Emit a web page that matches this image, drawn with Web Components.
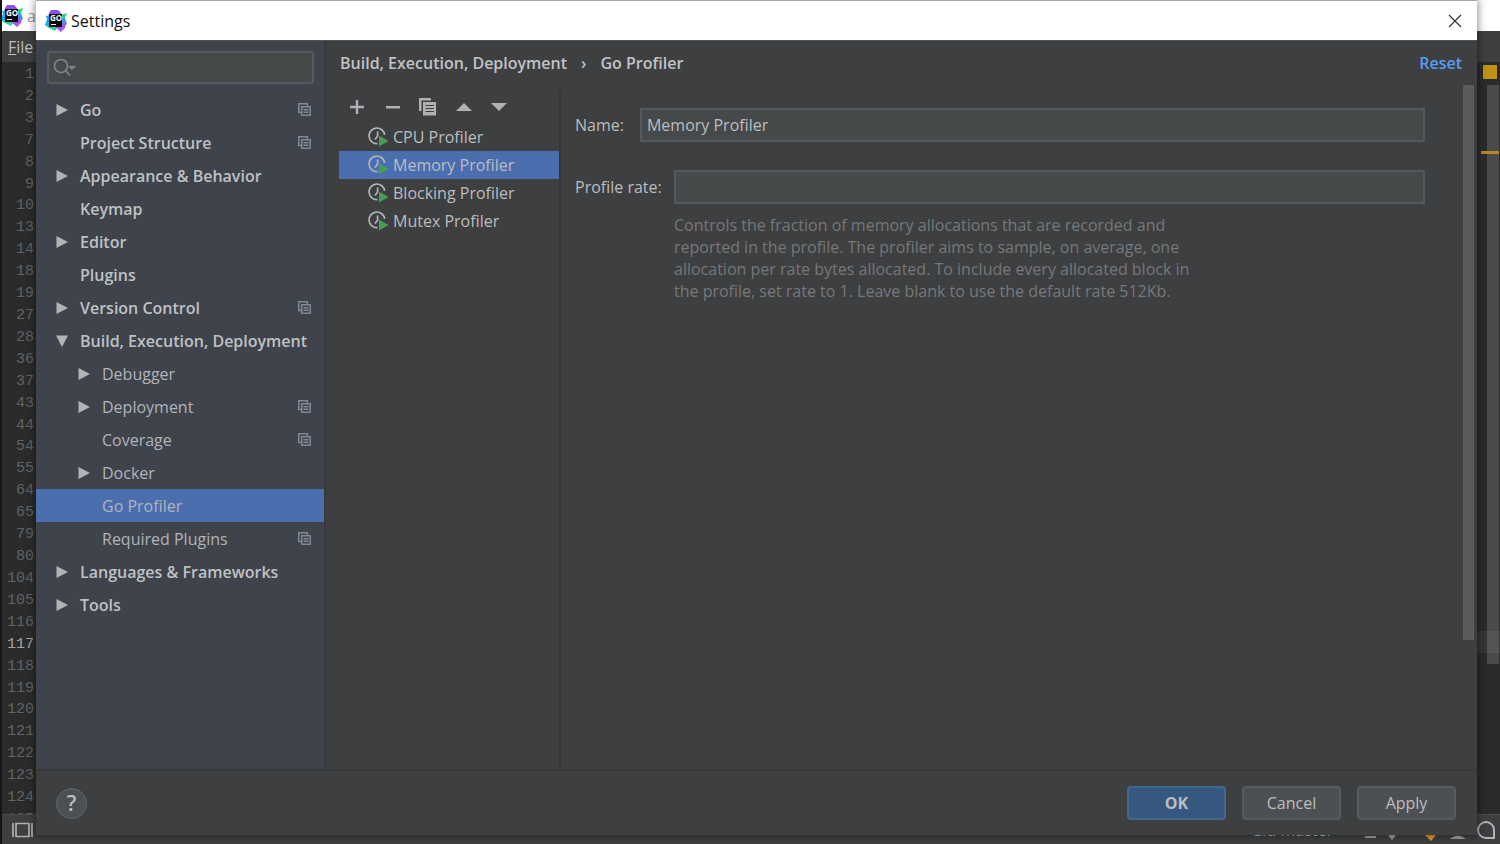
<!DOCTYPE html>
<html lang="en">
<head>
<meta charset="utf-8">
<title>Settings</title>
<style>
html, body { margin: 0; height: 100%; overflow: hidden; background: #2b2b2b; }
body { font: 16px/22px "Open Sans", "Noto Sans", sans-serif; color: #bbbdbf; }
</style>
</head>
<body>
<ide-window></ide-window>
<script>
const define = (name, html, setup) => {
  const template = document.createElement('template');
  template.innerHTML = html;
  customElements.define(name, class extends HTMLElement {
    constructor() {
      super();
      this.attachShadow({ mode: 'open' }).append(template.content.cloneNode(true));
    }
    connectedCallback() { if (setup) setup(this, this.shadowRoot); }
  });
};

define('go-logo', `
<style>:host { display: block; width: 22px; height: 22px; } svg { display: block; }</style>
<svg width="22" height="22" viewBox="0 0 22 22" role="img" aria-label="GoLand">
  <path d="M6 0H13L16 3V12H3L4 3Z" fill="#8a52f0"/>
  <path d="M15 5L22 3L20 8L16 10Z" fill="#21d789"/>
  <path d="M16 8L20 8L22 14L16 18Z" fill="#4a8ff0"/>
  <path d="M5 5L1 6L2 9L0 15L4 18L8 12Z" fill="#12aef5"/>
  <path d="M0 15L4 18L10 21L13 16Z" fill="#22d6a0"/>
  <path d="M10 17L16 22L20 18L21 13Z" fill="#a457ef"/>
  <rect x="4" y="4" width="13" height="13" fill="#050505"/>
  <text x="5" y="11" font-family="Open Sans, sans-serif" font-weight="700" font-size="8" fill="#fff">GO</text>
  <rect x="6" y="14" width="5" height="1" fill="#fff"/>
</svg>`);

define('scope-icon', `
<style>:host { display: block; width: 13px; height: 13px; } svg { display: block; }</style>
<svg width="13" height="13" fill="none" stroke="#7f8992" stroke-width="1.5">
  <path d="M3 9.4H.8V.8H9.4V3M3.7 3.7H12.2V12.2H3.7ZM5.5 6.7H10.5M5.5 9.3H10.5"/>
</svg>`);

define('tree-item', `
<style>
:host { display: flex; align-items: center; height: 33px; padding: 0 13px 0 20px; font-weight: 600; color: #bfc1c3; }
:host([level="2"]) { padding-left: 42px; font-weight: 400; color: #b0b4b9; }
:host([selected]) { background: #4b6eaf; }
.arrow { flex: none; width: 12px; height: 12px; margin-right: 12px; visibility: hidden; fill: #b1b3b5; }
:host([state]) .arrow { visibility: visible; }
:host([state="open"]) .arrow { transform: rotate(90deg); }
span { flex: 1; white-space: nowrap; }
scope-icon { display: none; }
:host([scoped]) scope-icon { display: block; }
</style>
<svg class="arrow" viewBox="0 0 12 12"><path d="M.5 0L12 6L.5 12Z"/></svg>
<span><slot></slot></span><scope-icon></scope-icon>`, el => el.setAttribute('role', 'treeitem'));

define('search-field', `
<style>
:host { display: flex; align-items: center; height: 33px; box-sizing: border-box; border: 2px solid #585c5e; border-radius: 3px; background: #45494a; padding-left: 4px; }
svg { flex: none; }
input { flex: 1; min-width: 0; height: 100%; padding: 0 4px; border: 0; outline: 0; background: none; color: inherit; font: inherit; }
</style>
<svg width="24" height="20" fill="none" stroke="#7d868c" stroke-width="1.6"><circle cx="8" cy="8" r="6.5"/><path d="M12.5 12.5L17 17.5"/><path d="M15 8H23L19 12Z" fill="#7d868c" stroke="none"/></svg>
<input type="text" aria-label="Search settings">`);

define('settings-tree', `
<style>
:host { display: block; background: #3e434c; border-right: 2px solid #36393c; padding-top: 10px; }
search-field { margin: 0 10px 9px 11px; }
</style>
<search-field></search-field>
<div role="tree" aria-label="Settings categories">
<tree-item state="closed" scoped>Go</tree-item>
<tree-item scoped>Project Structure</tree-item>
<tree-item state="closed">Appearance &amp; Behavior</tree-item>
<tree-item>Keymap</tree-item>
<tree-item state="closed">Editor</tree-item>
<tree-item>Plugins</tree-item>
<tree-item state="closed" scoped>Version Control</tree-item>
<tree-item state="open">Build, Execution, Deployment</tree-item>
<tree-item level="2" state="closed">Debugger</tree-item>
<tree-item level="2" state="closed" scoped>Deployment</tree-item>
<tree-item level="2" scoped>Coverage</tree-item>
<tree-item level="2" state="closed">Docker</tree-item>
<tree-item level="2" selected>Go Profiler</tree-item>
<tree-item level="2" scoped>Required Plugins</tree-item>
<tree-item state="closed">Languages &amp; Frameworks</tree-item>
<tree-item state="closed">Tools</tree-item>
</div>`);

define('profiler-item', `
<style>
:host { display: flex; align-items: center; gap: 4px; height: 28px; padding-left: 29px; white-space: nowrap; }
:host([selected]) { background: #4b6eaf; }
</style>
<svg width="21" height="20" fill="none" stroke="#b0b4b7" stroke-width="1.7">
  <path d="M9.5 16.6A7.8 7.8 0 1 1 16.6 8M9.6 4.5V9L7 12.5"/>
  <path d="M11 8.5L20.5 14L11 19.5Z" fill="#499c54" stroke="none"/>
</svg>
<span><slot></slot></span>`, el => el.setAttribute('role', 'option'));

define('profiler-list', `
<style>
:host { display: block; border-right: 2px solid #353638; }
nav { display: flex; justify-content: space-between; width: 162px; height: 20px; margin: 5px 0 6px 8px; }
button { width: 20px; height: 20px; padding: 0; border: 0; background: none; }
svg { display: block; fill: #afb1b3; }
</style>
<nav aria-label="Profiler configurations">
<button aria-label="Add"><svg width="20" height="20"><path d="M8.8 3H11.2V8.8H17V11.2H11.2V17H8.8V11.2H3V8.8H8.8Z"/></svg></button>
<button aria-label="Remove"><svg width="20" height="20"><path d="M3 9H17V11.5H3Z"/></svg></button>
<button aria-label="Copy"><svg width="20" height="20"><path d="M1 1H13V3.5H3.5V14H1ZM5 5H18V18.5H5Z"/><path d="M7.500 8.500H16M7.500 11.500H16M7.500 14.500H16" stroke="#3d3f41"/></svg></button>
<button aria-label="Move up"><svg width="20" height="20"><path d="M2 14L10 6L18 14Z"/></svg></button>
<button aria-label="Move down"><svg width="20" height="20"><path d="M2 6H18L10 14Z"/></svg></button>
</nav>
<div role="listbox" aria-label="Profilers">
<profiler-item>CPU Profiler</profiler-item>
<profiler-item selected>Memory Profiler</profiler-item>
<profiler-item>Blocking Profiler</profiler-item>
<profiler-item>Mutex Profiler</profiler-item>
</div>`);

define('profiler-form', `
<style>
:host { display: block; padding: 16px 38px 0 14px; }
.row { display: flex; align-items: center; gap: 16px; }
.row + .row { margin-top: 28px; gap: 12px; }
label { flex: none; }
input { flex: 1; min-width: 0; box-sizing: border-box; height: 34px; padding: 0 5px; border: 2px solid #56595b; border-radius: 0; outline: 0; background: #45494a; color: #bbbdbf; font: inherit; }
p { margin: 10px 0 0 99px; max-width: 520px; color: #777879; }
</style>
<div class="row"><label for="name">Name:</label><input id="name" type="text" value="Memory Profiler"></div>
<div class="row"><label for="rate">Profile rate:</label><input id="rate" type="text"></div>
<p>Controls the fraction of memory allocations that are recorded and<br>reported in the profile. The profiler aims to sample, on average, one<br>allocation per rate bytes allocated. To include every allocated block in<br>the profile, set rate to 1. Leave blank to use the default rate 512Kb.</p>`);

define('settings-dialog', `
<style>
:host { display: flex; flex-direction: column; box-sizing: border-box; background: #3d3f41; box-shadow: 0 0 8px 1px rgba(0,0,0,.45); }
header { display: flex; align-items: center; gap: 4px; height: 40px; box-sizing: border-box; padding: 0 15px 0 9px; border-top: 1px solid #a5a5a5; background: #fff; color: #111; }
header span { flex: 1; }
button { font: inherit; color: inherit; padding: 0; }
.close { width: 14px; height: 14px; border: 0; background: none; }
.close svg { display: block; }
main { flex: 1; min-height: 0; display: grid; grid-template-columns: 290px 1fr; border-top: 1px solid #505355; }
.page { display: flex; flex-direction: column; padding-left: 13px; }
.head { display: flex; align-items: center; height: 22px; padding: 11px 15px 18px 1px; font-weight: 600; gap: 14px; color: #c1c3c5; }
.head a { margin-left: auto; color: #589df6; text-decoration: none; }
.body { flex: 1; display: grid; grid-template-columns: 222px 1fr 11px; padding-right: 3px; }
.scroll { height: 555px; margin-top: -7px; background: #595b5d; }
footer { display: flex; align-items: center; gap: 16px; height: 64px; padding: 0 21px 0 20px; border-top: 2px solid #37393b; }
.help { width: 31px; height: 31px; margin-right: auto; box-sizing: border-box; border: 1px solid #64686a; border-radius: 50%; background: #4c5052; font-size: 21px; font-weight: 600; }
.action { width: 99px; height: 34px; box-sizing: border-box; border: 2px solid #585b5d; border-radius: 4px; background: #4c5052; }
.primary { border-color: #41698f; background: #365880; font-weight: 700; }
</style>
<header><go-logo></go-logo><span>Settings</span><button class="close" aria-label="Close"><svg width="14" height="14" stroke="#333" stroke-width="1.2"><path d="M1 1L13 13M13 1L1 13"/></svg></button></header>
<main>
  <settings-tree></settings-tree>
  <div class="page">
    <div class="head"><span>Build, Execution, Deployment</span><span>›</span><span>Go Profiler</span><a href="#reset">Reset</a></div>
    <div class="body"><profiler-list></profiler-list><profiler-form></profiler-form><div class="scroll"></div></div>
  </div>
</main>
<footer><button class="help" aria-label="Help">?</button><button class="action primary">OK</button><button class="action">Cancel</button><button class="action">Apply</button></footer>`);

define('line-gutter', `
<style>
:host { display: block; overflow: hidden; background: #2b2b2b; }
ol { display: grid; grid-auto-rows: 1fr; align-items: center; height: calc(100% + 15px); margin: 0; padding: 2px 2px 0 0; list-style: none; text-align: right; color: #606366; font: 15px/20px "Liberation Mono", monospace; }
.current { color: #a4a3a3; }
</style><ol></ol>`, (el, root) => {
  const lines = [1,2,3,7,8,9,10,13,14,18,19,27,28,36,37,43,44,54,55,64,65,79,80,104,105,116,117,118,119,120,121,122,123,124,125];
  root.querySelector('ol').innerHTML = lines.map(n => `<li${n === 117 ? ' class="current"' : ''}>${n}</li>`).join('');
});

define('error-stripe', `
<style>
:host { display: block; position: relative; background: #2b2b2b; }
.status { height: 14px; width: 14px; margin: 3px 0 6px 6px; background: #be9117; }
.thumb { height: 579px; width: 12px; margin-left: 10px; background: #4b4b4b; }
.caret { position: absolute; top: 569px; left: 0; right: 0; height: 22px; background: rgba(255,255,255,.05); }
.mark { position: absolute; top: 89px; left: 4px; right: 1px; height: 3px; background: #b58a26; }
</style>
<div class="status"></div><div class="thumb"></div><div class="caret"></div><div class="mark"></div>`);

define('status-bar', `
<style>
:host { display: flex; align-items: center; box-sizing: border-box; padding: 1px 4px 0 10px; border-top: 1px solid #4a4d4f; background: #3d3f41; }
.git { margin-left: auto; margin-right: 31px; }
.icons { display: flex; }
</style>
<svg width="21" height="16" fill="none" stroke="#afb1b3" stroke-width="1.7"><path d="M1 1V15M20 1V15M4 1.5H17V14.5H4Z"/></svg>
<span class="git">Git: master</span>
<svg class="icons" width="132" height="22" fill="#9a9c9e">
<path d="M1 17H12V19H1ZM24 16H32L28 21ZM86 20Q94 13 102 20Z"/>
<path d="M61 16H72L67 22Z" fill="#e0952a"/>
<path d="M130 19H122A8 8 0 1 1 130 11Z" fill="none" stroke="#b0b2b4" stroke-width="2"/>
</svg>`);

define('ide-window', `
<style>
:host { position: relative; display: grid; grid-template-rows: 31px 31px minmax(0, 1fr) 30px; box-sizing: border-box; height: 100vh; overflow: hidden; border-left: 2px solid #151515; background: #2b2b2b; }
.title { display: flex; align-items: center; gap: 4px; background: #fff; color: #999; }
.title go-logo { margin-left: -1px; }
.menu { display: flex; align-items: center; padding-left: 6px; background: #3d3f41; }
.menu a { color: inherit; text-decoration: none; }
.editor { display: grid; grid-template-columns: 34px 1fr 23px; }
settings-dialog { position: absolute; top: 0; right: 23px; bottom: 9px; left: 34px; }
</style>
<div class="title"><go-logo></go-logo><span>a</span></div>
<div class="menu"><a href="#file"><u>F</u>ile</a></div>
<div class="editor"><line-gutter></line-gutter><div></div><error-stripe></error-stripe></div>
<status-bar></status-bar>
<settings-dialog role="dialog" aria-label="Settings"></settings-dialog>`);
</script>
</body>
</html>
